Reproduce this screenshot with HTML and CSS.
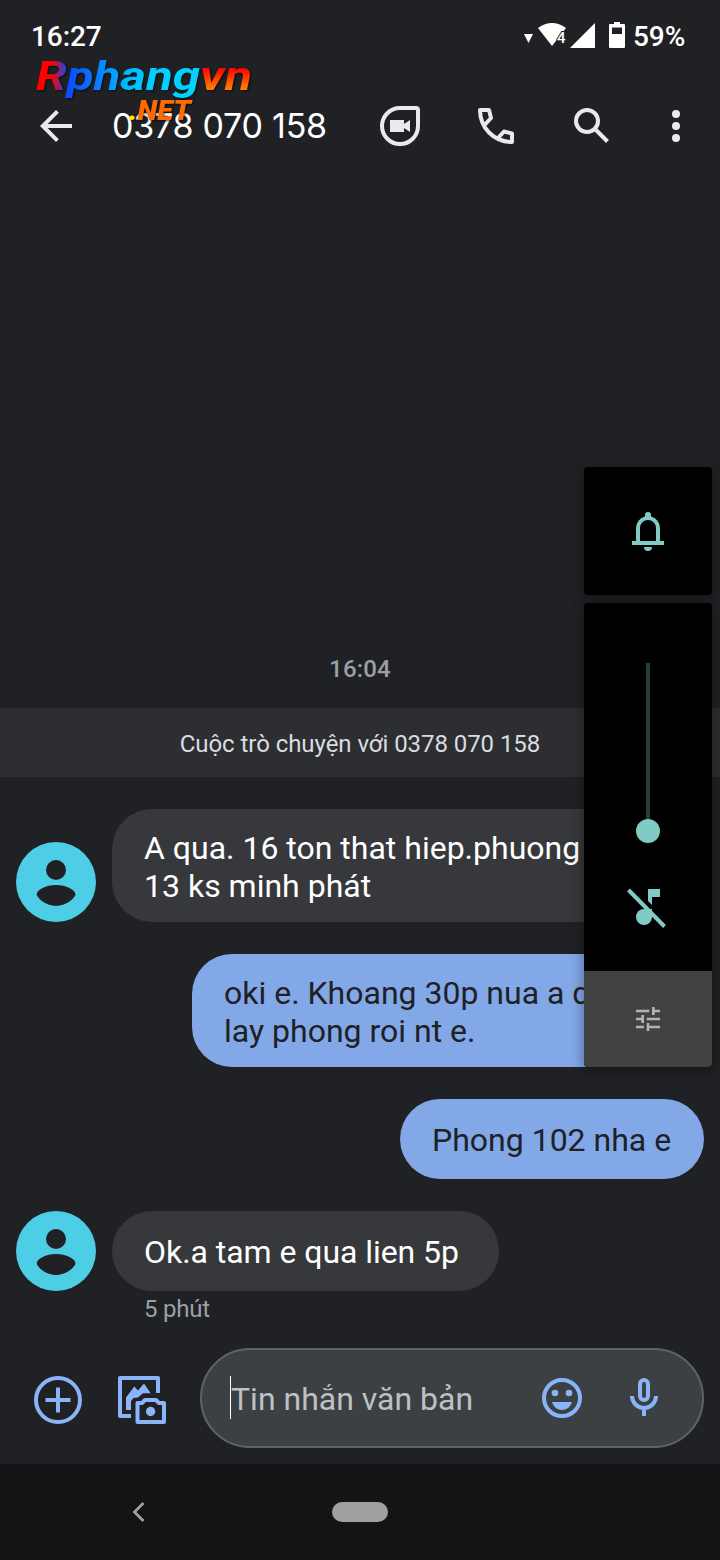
FILE: index.html
```html
<!DOCTYPE html>
<html lang="vi">
<head>
<meta charset="utf-8">
<title>0378 070 158</title>
<link rel="stylesheet" href="styles.css">
</head>
<body>
<div class="screen">
  <div class="status-bar">
    <span class="clock">16:27</span>
    <svg class="status-icons" viewBox="520 20 110 32" fill="#fff">
      <path d="M524 34h9l-4.500 9z"/>
      <path d="M538 28q14-10 28 0L552 46z"/>
      <text class="wifi-digit" x="557" y="43">4</text>
      <path d="M570 48L595 23V48z"/>
      <path fill-rule="evenodd" d="M614 22h6v2h4q1 0 1 1v22q0 1-1 1h-14q-1 0-1-1v-22q0-1 1-1h4zM612 27.500v6.500h10v-6.500z"/>
    </svg>
    <span class="battery">59%</span>
  </div>

  <header class="app-bar">
    <svg class="icon back" viewBox="0 0 24 24" fill="#e8eaed"><path d="M20 11H7.830l5.590-5.590L12 4l-8 8 8 8 1.410-1.410L7.830 13H20z"/></svg>
    <h1 class="title">0378 070 158</h1>
    <div class="actions">
      <svg class="icon" viewBox="0 0 24 24"><path d="M12 3h8a1 1 0 0 1 1 1v8a9 9 0 1 1-9-9z" fill="none" stroke="#e8eaed" stroke-width="2"/><path d="M7 9h7v2l3-2v6l-3-2v2H7z" fill="#e8eaed"/></svg>
      <svg class="icon" viewBox="472 102 48 48" fill="none" stroke="#e8eaed" stroke-width="4" stroke-linejoin="round"><path d="M485 124.500L491 118 489 110H480C480 128 494 142 512 142V133.500L504 131.500 498 138"/></svg>
      <svg class="icon" viewBox="568 102 48 48" fill="none" stroke="#e8eaed" stroke-width="4"><circle cx="587" cy="121" r="11"/><path d="M596 130L607.500 141.500"/></svg>
      <svg class="icon more" viewBox="0 0 48 48" fill="#e8eaed"><circle cx="24" cy="12" r="4"/><circle cx="24" cy="24" r="4"/><circle cx="24" cy="36" r="4"/></svg>
    </div>
  </header>

  <main class="thread">
    <time class="stamp">16:04</time>
    <p class="notice">Cuộc trò chuyện với 0378 070 158</p>
    <div class="messages">
      <div class="row">
        <svg class="avatar" viewBox="0 0 80 80"><circle cx="40" cy="40" r="40" fill="#4ecde6"/><circle cx="40" cy="28" r="10" fill="#202124"/><path d="M20.700 52.500C20.700 48 30 43 40 43S59.500 48 59.500 52.500C59.500 55 51 64 40 64S20.700 55 20.700 52.500z" fill="#202124"/></svg>
        <div class="bubble in wide">A qua. 16 ton that hiep.phuong<br>13 ks minh phát</div>
      </div>
      <div class="row sent">
        <div class="bubble out wide">oki e. Khoang 30p nua a qua<br>lay phong roi nt e.</div>
      </div>
      <div class="row sent">
        <div class="bubble out single">Phong 102 nha e</div>
      </div>
      <div class="row">
        <svg class="avatar" viewBox="0 0 80 80"><circle cx="40" cy="40" r="40" fill="#4ecde6"/><circle cx="40" cy="28" r="10" fill="#202124"/><path d="M20.700 52.500C20.700 48 30 43 40 43S59.500 48 59.500 52.500C59.500 55 51 64 40 64S20.700 55 20.700 52.500z" fill="#202124"/></svg>
        <div class="bubble in single reply">Ok.a tam e qua lien 5p</div>
      </div>
    </div>
    <span class="caption">5 phút</span>
  </main>

  <footer class="composer">
    <svg class="tool" viewBox="32 1374 52 52" fill="none" stroke="#8ab4f8" stroke-width="4"><circle cx="58" cy="1400" r="22"/><path d="M45.500 1400h25M58 1387.500v25"/></svg>
    <svg class="tool" viewBox="116 1374 52 52" fill="none" stroke="#8ab4f8" stroke-width="4" stroke-linejoin="round">
      <path d="M158 1393V1378H120V1416H131"/>
      <path d="M137.500 1403H142L145 1400H156L159 1403H164V1422H137.500z"/>
      <circle cx="150.600" cy="1411.500" r="4.700" fill="#8ab4f8" stroke="none"/>
      <path d="M126 1410V1397.500L134.300 1386.500 138 1390.500 144 1383.500 150.700 1393.200H143L138 1397.500 133.500 1398 131 1401V1410z" fill="#8ab4f8" stroke="none"/>
    </svg>
    <div class="field">
      <span class="caret"></span>
      <span class="placeholder">Tin nhắn văn bản</span>
      <svg class="field-icon" viewBox="538 1374 48 48" fill="#8ab4f8"><circle cx="562" cy="1398" r="18" fill="none" stroke="#8ab4f8" stroke-width="4"/><circle cx="555" cy="1393" r="3.300"/><circle cx="569" cy="1393" r="3.300"/><path d="M552 1402h20c-1.500 5-5.500 8-10 8s-8.500-3-10-8z"/></svg>
      <svg class="field-icon mic" viewBox="620 1374 48 48" fill="none" stroke="#8ab4f8" stroke-width="4"><rect x="640" y="1380" width="8" height="20" rx="4"/><path d="M632 1396a12 12 0 0 0 24 0M644 1408v8"/></svg>
    </div>
  </footer>

  <nav class="nav-bar">
    <svg class="nav-back" viewBox="0 0 24 24" fill="none" stroke="#a0a0a0" stroke-width="2.800"><path d="M17.500 3L8.500 12l9 9"/></svg>
    <span class="home"></span>
  </nav>

  <svg class="watermark" viewBox="30 52 230 76">
    <defs>
      <linearGradient id="brand" gradientUnits="userSpaceOnUse" x1="36" y1="0" x2="200" y2="0">
        <stop offset="0" stop-color="#f00"/><stop offset=".1" stop-color="#f00"/><stop offset=".19" stop-color="#0a4bff"/><stop offset=".32" stop-color="#0a6cff"/><stop offset=".55" stop-color="#00b8ff"/><stop offset=".75" stop-color="#00d2ff"/>
      </linearGradient>
      <linearGradient id="flame" gradientUnits="userSpaceOnUse" x1="0" y1="68" x2="0" y2="91">
        <stop offset="0" stop-color="#f00"/><stop offset="1" stop-color="#ff8a00"/>
      </linearGradient>
    </defs>
    <text class="brand" x="36" y="90" textLength="164" lengthAdjust="spacingAndGlyphs" fill="url(#brand)">Rphang</text>
    <text class="brand" x="200" y="90" textLength="52" lengthAdjust="spacingAndGlyphs" fill="url(#flame)">vn</text>
    <text class="domain" x="129" y="120" textLength="62" lengthAdjust="spacingAndGlyphs" fill="#ff6a00"><tspan fill="#ffe600">.</tspan>NET</text>
  </svg>

  <aside class="volume">
    <div class="ringer">
      <svg viewBox="624 507 48 48" fill="#80cbc4"><path d="M632 541h4V528a12 12 0 0 1 9-11.600V515a3 3 0 0 1 6 0v1.400a12 12 0 0 1 9 11.600v13h4v4h-32zM640 541h16V528a8 8 0 0 0-16 0zM644 547h8a4 4 0 0 1-8 0z" fill-rule="evenodd"/></svg>
    </div>
    <div class="slider">
      <div class="level">
        <span class="track"></span>
        <span class="thumb"></span>
      </div>
      <svg class="mute" viewBox="624 884 48 48" fill="#80cbc4"><path d="M648 889h12v8h-8v8l-4-4z"/><circle cx="644" cy="917" r="8"/><path d="M648 909h4v8h-4z"/><path d="M628.500 890L664.500 926.500" stroke="#80cbc4" stroke-width="4"/></svg>
      <div class="settings">
        <svg viewBox="0 0 24 24" fill="#b3b3b3"><path d="M0 2.700h13.300v2.600H0zM16 0h2.700v2.700H24v2.600h-5.300V8H16zM0 10.700h5.300V8H8v8H5.300v-2.700H0zM10.700 10.700H24v2.600H10.700zM0 18.700h8v2.600H0zM10.700 16h2.600v2.700H24v2.600H13.300V24h-2.600z"/></svg>
      </div>
    </div>
  </aside>
</div>
</body>
</html>
```

FILE: styles.css
```css
* {
  box-sizing: border-box;
}

body {
  margin: 0;
  background: #202124;
  font-family: Roboto, "Noto Sans", sans-serif;
}

svg {
  display: block;
  flex: none;
}

.screen {
  position: relative;
  display: flex;
  flex-direction: column;
  width: 720px;
  height: 1560px;
  overflow: hidden;
  background: #202124;
}

/* Status bar */
.status-bar {
  display: flex;
  align-items: center;
  height: 72px;
  padding: 0 34px 0 31px;
  color: #fff;
  font-size: 28px;
  font-weight: 500;
  letter-spacing: -0.1px;
  white-space: nowrap;
}

.status-icons {
  width: 110px;
  height: 32px;
  margin-left: auto;
}

.battery {
  width: 53px;
  margin-left: 3px;
}

.wifi-digit {
  font: 500 15px Roboto, sans-serif;
  paint-order: stroke;
  stroke: #202124;
  stroke-width: 2px;
}

/* App bar */
.app-bar {
  display: flex;
  align-items: center;
  height: 108px;
  padding: 0 20px 0 32px;
}

.icon {
  width: 48px;
  height: 48px;
}

.title {
  width: 216px;
  margin: 0 0 0 32px;
  color: #fff;
  font: 400 34px/44px Inter, sans-serif;
  letter-spacing: -0.25px;
  white-space: nowrap;
}

.actions {
  display: flex;
  gap: 48px;
  margin-left: 48px;
}

.actions .more {
  margin-left: -12px;
}

/* Conversation */
.thread {
  display: flex;
  flex: 1;
  flex-direction: column;
  justify-content: flex-end;
  padding-bottom: 24px;
}

.stamp {
  margin-bottom: 24px;
  color: #9aa0a6;
  font-size: 24px;
  font-weight: 500;
  line-height: 30px;
  letter-spacing: 0.2px;
  text-align: center;
}

.notice {
  height: 69px;
  margin: 0;
  background: #2d2e31;
  color: #dadce0;
  font-size: 24px;
  line-height: 72px;
  letter-spacing: -0.06px;
  text-align: center;
}

.messages {
  display: flex;
  flex-direction: column;
  gap: 32px;
  padding: 32px 16px 0;
}

.row {
  display: flex;
  align-items: flex-end;
  gap: 16px;
}

.row.sent {
  justify-content: flex-end;
}

.avatar {
  width: 80px;
  height: 80px;
}

.bubble {
  height: 113px;
  padding: 20px 32px 0;
  border-radius: 40px;
  font-size: 32px;
  line-height: 38px;
  letter-spacing: 0;
  white-space: nowrap;
}

.bubble.single {
  height: 80px;
  padding-top: 22px;
}

.bubble.single.out {
  width: 304px;
}

.bubble.reply {
  width: 387px;
  letter-spacing: -0.05px;
}

.bubble.wide {
  width: 512px;
}

.in {
  background: #37383b;
  color: #fff;
}

.out {
  background: #82a8e7;
  color: #202124;
}

.caption {
  margin: 4px 0 0 144px;
  color: #9aa0a6;
  font-size: 24px;
  line-height: 29px;
  letter-spacing: -0.2px;
}

/* Composer */
.composer {
  display: flex;
  align-items: center;
  height: 116px;
  padding: 0 16px 16px 32px;
}

.tool {
  width: 52px;
  height: 52px;
  margin: 4px 32px 0 0;
}

.field {
  display: flex;
  flex: 1;
  align-items: center;
  height: 100px;
  padding: 0 34px 0 28px;
  border: 2px solid #5f6368;
  border-radius: 50px;
  background: #3c4043;
}

.caret {
  width: 1px;
  height: 43px;
  margin-bottom: 1px;
  background: #fff;
}

.placeholder {
  flex: 1;
  padding-top: 2px;
  color: #bdc1c6;
  font-size: 32px;
  line-height: 40px;
  white-space: nowrap;
}

.field-icon {
  width: 48px;
  height: 48px;
}

.mic {
  margin-left: 34px;
}

/* Navigation bar */
.nav-bar {
  display: grid;
  grid-template-columns: 1fr 56px 1fr;
  align-items: center;
  height: 96px;
  background: #131416;
}

.nav-back {
  width: 24px;
  height: 24px;
  margin-left: 126px;
}

.home {
  height: 20px;
  border-radius: 10px;
  background: #a0a0a0;
}

/* Logo laid over the app bar */
.watermark {
  position: absolute;
  top: 52px;
  left: 30px;
  width: 230px;
  height: 76px;
  filter: drop-shadow(1px 1px 1px #000a);
}

.brand {
  font: italic 700 41px Roboto, sans-serif;
}

.domain {
  font: italic 900 27px Roboto, sans-serif;
}

/* Volume panel floating over the conversation */
.volume {
  position: absolute;
  top: 467px;
  right: 8px;
  display: flex;
  flex-direction: column;
  gap: 8px;
  width: 128px;
}

.ringer,
.slider {
  border-radius: 4px;
  background: #000;
  box-shadow: 0 4px 14px #0006;
}

.ringer {
  display: grid;
  place-items: center;
  height: 128px;
}

.ringer svg,
.mute {
  width: 48px;
  height: 48px;
}

.slider {
  display: flex;
  flex-direction: column;
  align-items: center;
  height: 464px;
  padding-top: 60px;
  overflow: hidden;
}

.level {
  display: flex;
  flex-direction: column;
  align-items: center;
}

.track {
  width: 4px;
  height: 156px;
  background: #263d3b;
}

.thumb {
  width: 24px;
  height: 24px;
  border-radius: 50%;
  background: #80cbc4;
}

.mute {
  margin-top: 41px;
}

.settings {
  display: grid;
  place-items: center;
  width: 100%;
  height: 96px;
  margin-top: auto;
  background: #424242;
}

.settings svg {
  width: 24px;
  height: 24px;
}
```
